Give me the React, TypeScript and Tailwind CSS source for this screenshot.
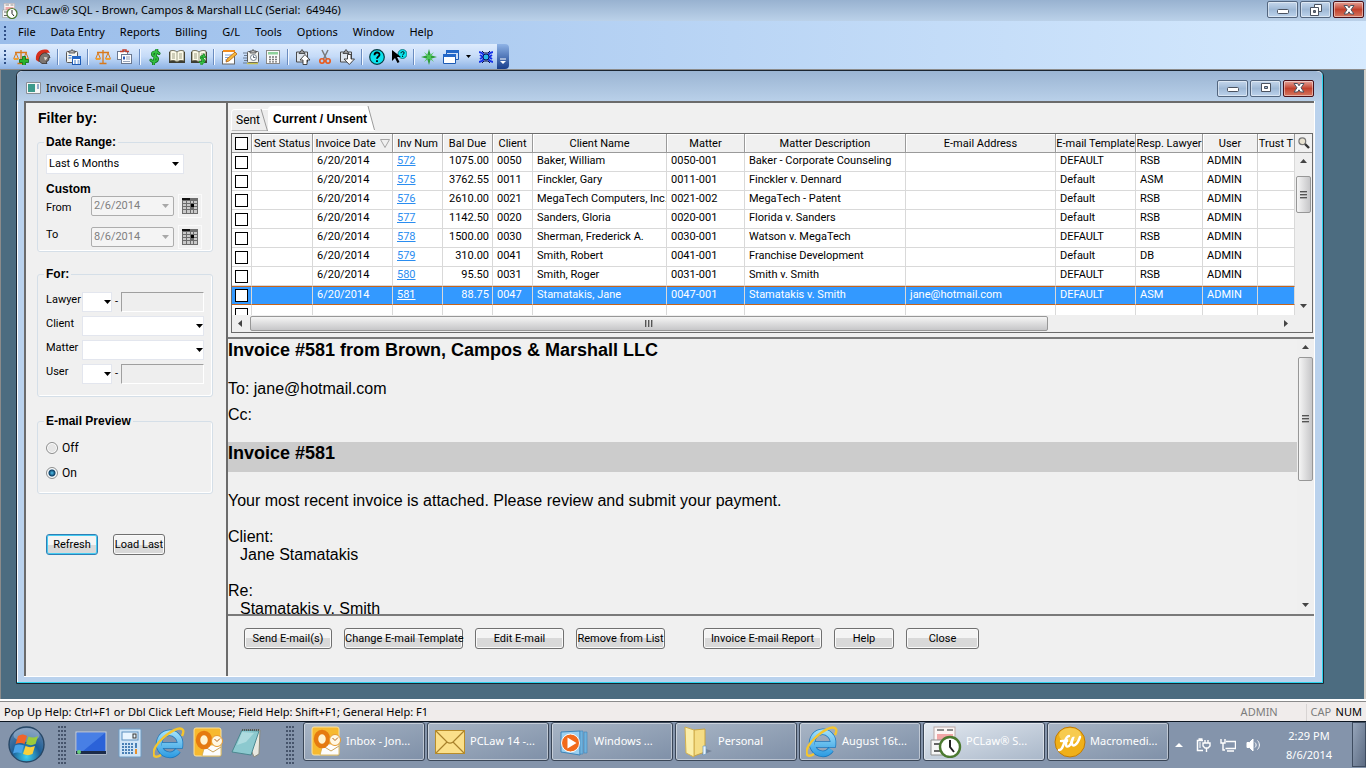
import type { ReactNode } from "react";

const menuItems = ["File", "Data Entry", "Reports", "Billing", "G/L", "Tools", "Options", "Window", "Help"];

// Column widths of the queue grid, the last one takes what is left
const columns = [
  { title: "Sent Status", width: "w-[61px]" },
  { title: "Invoice Date", width: "w-[80px]" },
  { title: "Inv Num", width: "w-[50px]" },
  { title: "Bal Due", width: "w-[50px]" },
  { title: "Client", width: "w-[40px]" },
  { title: "Client Name", width: "w-[134px]" },
  { title: "Matter", width: "w-[78px]" },
  { title: "Matter Description", width: "w-[161px]" },
  { title: "E-mail Address", width: "w-[150px]" },
  { title: "E-mail Template", width: "w-[80px]" },
  { title: "Resp. Lawyer", width: "w-[67px]" },
  { title: "User", width: "w-[55px]" },
  { title: "Trust T", width: "" },
];

const invoices = [
  { num: "572", due: "1075.00", client: "0050", name: "Baker, William", matter: "0050-001", desc: "Baker - Corporate Counseling", email: "", template: "DEFAULT", lawyer: "RSB" },
  { num: "575", due: "3762.55", client: "0011", name: "Finckler, Gary", matter: "0011-001", desc: "Finckler v. Dennard", email: "", template: "Default", lawyer: "ASM" },
  { num: "576", due: "2610.00", client: "0021", name: "MegaTech Computers, Inc.", matter: "0021-002", desc: "MegaTech - Patent", email: "", template: "Default", lawyer: "RSB" },
  { num: "577", due: "1142.50", client: "0020", name: "Sanders, Gloria", matter: "0020-001", desc: "Florida v. Sanders", email: "", template: "Default", lawyer: "RSB" },
  { num: "578", due: "1500.00", client: "0030", name: "Sherman, Frederick A.", matter: "0030-001", desc: "Watson v. MegaTech", email: "", template: "DEFAULT", lawyer: "RSB" },
  { num: "579", due: "310.00", client: "0041", name: "Smith, Robert", matter: "0041-001", desc: "Franchise Development", email: "", template: "Default", lawyer: "DB" },
  { num: "580", due: "95.50", client: "0031", name: "Smith, Roger", matter: "0031-001", desc: "Smith v. Smith", email: "", template: "DEFAULT", lawyer: "RSB" },
  { num: "581", due: "88.75", client: "0047", name: "Stamatakis, Jane", matter: "0047-001", desc: "Stamatakis v. Smith", email: "jane@hotmail.com", template: "DEFAULT", lawyer: "ASM" },
];

/* ---------- Toolbar icons ---------- */

const Scales = () => (
  <g fill="none" stroke="#d9791a" strokeWidth="1.3">
    <path d="M8 1v13M2 3.5h12M4.5 14.5h7" />
    <path d="M3 4L.8 9.5h4.6zM13 4l-2.4 5.5h4.8z" strokeWidth="1" />
    <path d="M.8 10h4.6M10.6 10h4.8" stroke="#f0a030" strokeWidth="2" />
  </g>
);

const Clip = () => (
  <g>
    <rect x="1.5" y="2.5" width="11" height="11" rx="1" fill="#f4f4f0" stroke="#5a5a5a" />
    <path d="M4 4V2h2l1-1.5L8 2h2v2z" fill="#b8b8b8" stroke="#444" strokeWidth=".8" />
  </g>
);

const ClipArrow = ({ up }: { up?: boolean }) => (
  <g>
    <path d="M1.5 3h11v10h-11z" fill="#dfe6ee" stroke="#4a4a4a" />
    <path d="M4 4.5l3-4 3 4z" fill="#999" stroke="#333" strokeWidth=".8" />
    <path
      d={up ? "M10 5.5l5 5.5h-3v4.5H8V11H5z" : "M8.5 5.5h3.5v4.5h3.5l-5.2 5.5L5 10h3.5z"}
      fill="#fff"
      stroke="#333"
      strokeWidth=".9"
    />
  </g>
);

const Book = () => (
  <g>
    <path d="M0 3h16v11H0z" fill="#3b3b30" />
    <path d="M1 2c3-1 5-.5 7 1 2-1.5 4-2 7-1v10c-3-1-5-.5-7 1-2-1.5-4-2-7-1z" fill="#fbf9e8" stroke="#55513a" strokeWidth=".8" />
    <path d="M8 3v10M3 5h3M3 7h3M3 9h3M10 5h3M10 7h3M10 9h3" stroke="#8c8a70" strokeWidth=".8" />
  </g>
);

// Dollar sign as an S bend with a slanted bar
const Dollar = () => (
  <g fill="none" strokeLinecap="round">
    <path d="M12 4.5C10 2 5.5 2.5 5.5 5.2c0 3 5.5 2 5 5C10 13 6 13.5 4 11.2M9.8.8L6.5 15.2" stroke="#11701c" strokeWidth="3" />
    <path d="M12 4.5C10 2 5.5 2.5 5.5 5.2c0 3 5.5 2 5 5C10 13 6 13.5 4 11.2M9.8.8L6.5 15.2" stroke="#35c143" strokeWidth="1.6" />
  </g>
);

const toolbar: (ReactNode | "sep")[] = [
  <>
    <Scales />
    <path d="M9.5 7.5h3v3h3v3h-3v3h-3v-3h-3v-3h3z" fill="#2bb52b" stroke="#0b6b14" strokeWidth=".8" />
  </>,
  <>
    <path d="M1 11C0 4 5-1 13 1l2 3C9 3 5 6 4 13z" fill="#d62f1c" />
    <path d="M4 12C4 7 7 3.5 11 4l3 2 1 3-3-.5 2 1.5-1 2-2 .5 1 2H7z" fill="#7d7570" stroke="#37302c" strokeWidth=".8" />
    <path d="M9 8l4 .5-3 3z" fill="#e0d8d0" />
  </>,
  "sep",
  <>
    <Clip />
    <rect x="7.5" y="7.5" width="8" height="8" fill="#fff" stroke="#1c5ab4" />
    <path d="M7 7h9v3H7z" fill="#2468c8" />
    <path d="M9 12h2M12.5 12h2M9 14h2M12.5 14h2M3.5 6.5h3M3.5 9h3" stroke="#3a76c4" />
  </>,
  "sep",
  <Scales />,
  <>
    <rect x=".5" y="2.5" width="10" height="8" fill="#fff" stroke="#6a7890" />
    <path d="M3 2.5h3V1h3v1.5h3" stroke="#c23b2a" strokeWidth="1.5" fill="none" />
    <rect x="4.5" y="5.5" width="10" height="9" fill="#fbfcff" stroke="#6a7890" />
    <path d="M9 8h4M9 10h4M6 12.5h7" stroke="#98a4b8" />
    <path d="M6 7.5h2v3H6z" fill="#2c5cb8" />
  </>,
  "sep",
  <Dollar />,
  <Book />,
  <>
    <Book />
    <g transform="translate(6 5) scale(.7)"><Dollar /></g>
  </>,
  "sep",
  <>
    <rect x="1.5" y="2.5" width="12" height="12.5" fill="#fff" stroke="#666" />
    <path d="M2 1h12v2H2z" fill="#f28c1c" />
    <path d="M4 6h7M4 8.5h5M4 11h4" stroke="#7fa3d8" />
    <path d="M5 13l1-3 8-7 2 2-8 7z" fill="#f6b93c" stroke="#b35f15" strokeWidth=".8" />
  </>,
  <>
    <path d="M0 4h4M1 6.5h4M0 9h4M1 11.5h4M0 14h4" stroke="#6d7f94" />
    <g transform="translate(3 0)">
      <Clip />
      <circle cx="7.5" cy="8.5" r="3" fill="#fff" stroke="#567" strokeWidth=".8" />
      <path d="M7.5 6.5v2h2" stroke="#345" fill="none" strokeWidth=".8" />
    </g>
    <path d="M4 14.5h11" stroke="#c9c34a" strokeWidth="1.5" />
  </>,
  <>
    <rect x="1.5" y="1.5" width="13" height="13" fill="#fafafa" stroke="#888" />
    <path d="M3 3h10v2.5H3z" fill="#8ed19b" />
    <path d="M4 8h2M7 8h2M10 8h2M4 10.5h2M7 10.5h2M10 10.5h2M4 12.8h2M7 12.8h2M10 12.8h2" stroke="#777" strokeWidth="1.3" />
  </>,
  "sep",
  <ClipArrow up />,
  <>
    <path d="M5 1l4.5 9M11 1L6.5 10" stroke="#7a7a7a" strokeWidth="1.5" />
    <circle cx="5" cy="12" r="2.2" fill="none" stroke="#e8581a" strokeWidth="1.6" />
    <circle cx="11" cy="12" r="2.2" fill="none" stroke="#e8581a" strokeWidth="1.6" />
  </>,
  <ClipArrow />,
  "sep",
  <>
    <circle cx="8" cy="8" r="7.3" fill="#0be3ee" stroke="#053b40" strokeWidth="1.2" />
    <path d="M5.5 6.2c0-3.5 5-3.5 5-.5C10.5 7.5 8 7.5 8 9.8M8 11.2v1.8" fill="none" stroke="#000" strokeWidth="1.8" />
  </>,
  <>
    <circle cx="11.5" cy="5" r="4.5" fill="#0be3ee" stroke="#0a6a70" strokeWidth=".8" />
    <path d="M10 4.2c0-2 3.2-2 3.2-.2 0 1.2-1.6 1-1.6 2.3M11.6 7v1" fill="none" stroke="#000" />
    <path d="M1 1v11l3-3 2.5 5 2-1-2.5-5h4z" fill="#000" />
  </>,
  "sep",
  <>
    <path d="M8 0l1.8 6.2L16 8l-6.2 1.8L8 16l-1.8-6.2L0 8l6.2-1.8z" fill="#2f9e3a" />
    <path d="M3 3l4 3 2 0 4-3-3 4v2l3 4-4-3H7l-4 3 3-4V7z" fill="#49c653" />
  </>,
  <>
    <path d="M3.5 1.5h12v9h-12z" fill="#cfe0f8" stroke="#1c5ab4" />
    <path d="M3 1h13v3H3z" fill="#2468c8" />
    <path d="M.5 5.5h12v9H.5z" fill="#fff" stroke="#1c5ab4" />
    <path d="M0 5h13v3H0z" fill="#2468c8" />
  </>,
];

function Toolbar() {
  return (
    <div className="flex h-[25px] items-center">
      <div className="flex h-full items-center bg-gradient-to-b from-[#dfecfd] via-[#c5dbf8] to-[#8db2e4]">
        <Grip />
        {toolbar.map((item, i) =>
          item === "sep" ? (
            <span key={i} className="mx-[3px] h-4 w-[2px] border-l border-[#6a8cc0] bg-[#f1f7ff]" />
          ) : (
            <button key={i} type="button" className="flex h-[22px] w-[22px] items-center justify-center">
              <svg width="16" height="16" viewBox="0 0 16 16">{item}</svg>
            </button>
          )
        )}
        <button type="button" aria-label="Arrange windows" className="flex h-[22px] w-[13px] items-center justify-center">
          <svg width="5" height="3"><path d="M0 0h5L2.5 3z" fill="#000" /></svg>
        </button>
        <button type="button" aria-label="Web" className="flex h-[22px] w-[22px] items-center justify-center">
          <svg width="14" height="12" viewBox="0 0 14 12">
            <path d="M0 1l3 1 2 2M14 1l-3 1-2 2M0 11l3-1 2-2M14 11l-3-1-2-2M1 4l3 2-3 2M13 4l-3 2 3 2" fill="none" stroke="#1330e8" strokeWidth="2" />
            <circle cx="7" cy="6" r="3" fill="#2cb8e8" stroke="#06135c" />
            <path d="M3 0l2 2h4l2-2M3 12l2-2h4l2 2" stroke="#04104a" fill="none" />
          </svg>
        </button>
      </div>
      <button
        type="button"
        aria-label="Toolbar options"
        className="flex h-full w-3 items-end justify-center rounded-r-sm bg-gradient-to-b from-[#8fb3e6] to-[#1a3f8c] pb-1"
      >
        <svg width="6" height="7"><path d="M0 1h6" stroke="#fff" /><path d="M0 3h6L3 6z" fill="#fff" /></svg>
      </button>
    </div>
  );
}

function Grip() {
  return (
    <span className="flex w-[10px] flex-col items-center gap-[2px]">
      {[0, 1, 2, 3].map((i) => (
        <span key={i} className="h-[2px] w-[2px] bg-[#2f4f86]" />
      ))}
    </span>
  );
}

/* ---------- Window chrome ---------- */

function CaptionButton({ kind, restored }: { kind: "min" | "max" | "close"; restored?: boolean }) {
  const look =
    kind === "close"
      ? "border-[#4a1018] bg-gradient-to-b from-[#e3a198] via-[#c2402c] to-[#d5765f]"
      : "border-[#53667f] bg-gradient-to-b from-[#c5d7ec] via-[#9fb9d6] to-[#bdd3ec]";
  return (
    <button
      type="button"
      aria-label={kind}
      className={`flex h-[17px] w-[31px] items-center justify-center rounded-[2px] border shadow-[inset_0_0_0_1px_rgba(255,255,255,0.45)] ${look}`}
    >
      <svg width="14" height="12" viewBox="0 0 14 12" stroke="#4a5260" fill="#fff">
        {kind === "min" && <rect x="1.5" y="5.5" width="11" height="4" rx="1" />}
        {kind === "max" && !restored && <path fillRule="evenodd" d="M2.5 1.5h9v8h-9zM5.5 4.5v2h3v-2z" />}
        {kind === "max" && restored && (
          <>
            <path d="M5.5.5h7v7h-7z" />
            <path fillRule="evenodd" d="M1.5 3.5h8v8h-8zM4.5 6.5v2h2v-2z" />
          </>
        )}
        {kind === "close" && (
          <path d="M2 1.5h3.5L7 3.8 8.5 1.5H12L9 5.8l3 4.2H8.5L7 7.8 5.5 10H2l3-4.2z" />
        )}
      </svg>
    </button>
  );
}

function AppIcon({ size }: { size: number }) {
  return (
    <svg width={size} height={size} viewBox="0 0 32 32" className="shrink-0">
      <rect x="4" y="1" width="21" height="24" fill="#fbf5f4" stroke="#b9a8a6" />
      <path d="M7 4h7M17 4h6" stroke="#8d8d8d" strokeWidth="2" />
      <path d="M7 8h16v7H7z" fill="#f1a7a7" />
      <path d="M1 14h12v15H1z" fill="#f6f6f6" stroke="#8f8f8f" />
      <path d="M4 18h6M4 25h6" stroke="#666" strokeWidth="2" />
      <circle cx="20" cy="21" r="10" fill="#fff" stroke="#4c7a31" strokeWidth="2.4" />
      <path d="M20 14v7l4 5" stroke="#222" strokeWidth="2" fill="none" />
    </svg>
  );
}

/* ---------- Form bits ---------- */

type DropDownProps = { id: string; value?: string; className: string; disabled?: boolean; edge?: boolean };

function DropDown({ id, value = "", className, disabled, edge }: DropDownProps) {
  return (
    <span className={`relative block h-5 ${className}`}>
      <select
        id={id}
        disabled={disabled}
        defaultValue={value}
        className={`h-full w-full appearance-none border pl-[2px] ${
          disabled ? "rounded-[2px] border-[#adadad] bg-[#f4f4f4] text-[#7f7f7f] opacity-100" : "border-[#e3e6ee] bg-white text-black"
        }`}
      >
        <option value={value}>{value}</option>
      </select>
      <svg width="7" height="4" className={`pointer-events-none absolute top-2 ${edge ? "right-px" : "right-[5px]"}`}>
        <path d="M0 0h7L3.5 4z" fill={disabled ? "#a8a8a8" : "#000"} />
      </svg>
    </span>
  );
}

function CalendarButton({ label }: { label: string }) {
  return (
    <button type="button" aria-label={label} className="ml-1 flex h-6 w-6 items-center justify-center border border-[#fafafa]">
      <svg width="16" height="16" viewBox="0 0 16 16">
        <path d="M0 0h16v16H0z" fill="#6c6c6c" />
        <path d="M0 0h8v2H0z" fill="#111" />
        <path
          d="M1 3h3v2H1zM5 3h3v2H5zM9 3h2v2H9zM12 3h3v2h-3zM1 6h3v2H1zM5 6h3v2H5zM12 6h3v2h-3zM1 9h3v2H1zM5 9h3v2H5zM12 9h3v2h-3zM1 12h3v3H1zM5 12h3v3H5zM9 12h2v3H9zM12 12h3v3h-3z"
          fill="#c9c9c9"
        />
        <path d="M9 6h3v3H9z" fill="#000" />
      </svg>
    </button>
  );
}

function Group({ title, className, children }: { title: string; className: string; children: ReactNode }) {
  return (
    <fieldset className={`rounded-[3px] border border-[#d5dfe8] px-2 shadow-[inset_-1px_-1px_0_#fff] ${className}`}>
      <legend className="-ml-[2px] h-4 px-[2px] font-['Liberation_Sans',sans-serif] text-[12px] leading-4 font-bold">{title}</legend>
      {children}
    </fieldset>
  );
}

function PushButton({ children, className, focused }: { children: ReactNode; className: string; focused?: boolean }) {
  return (
    <button
      type="button"
      className={`h-[21px] rounded-[3px] border bg-gradient-to-b from-[#f4f4f4] from-50% to-[#d9d9d9] to-50% pt-[2px] whitespace-nowrap ${
        focused ? "border-[#2f7fb5] shadow-[inset_0_0_0_1px_#45ccf2]" : "border-[#707070] shadow-[inset_0_0_0_1px_#fafafa]"
      } ${className}`}
    >
      {children}
    </button>
  );
}

function FilterPanel() {
  return (
    <aside className="w-[202px] shrink-0 border-t-2 border-l-2 border-[#6b6b6b] bg-[#f0f0f0] pr-[13px] pl-[11px]">
      <h2 className="mt-[5px] h-5 pl-px font-['Liberation_Sans',sans-serif] text-[14px] leading-5 font-bold">Filter by:</h2>

      <Group title="Date Range:" className="mt-[6px] h-[118px]">
        <div className="mt-1">
          <label htmlFor="range" className="sr-only">Date Range</label>
          <DropDown id="range" value="Last 6 Months" className="w-[138px]" />
        </div>
        <h3 className="mt-[7px] h-[13px] font-['Liberation_Sans',sans-serif] text-[12px] leading-4 font-bold">Custom</h3>
        <div className="flex h-6 items-center">
          <label htmlFor="from" className="w-[45px] pt-1">From</label>
          <DropDown id="from" value="2/6/2014" disabled className="w-[83px]" />
          <CalendarButton label="Pick from date" />
        </div>
        <div className="mt-[7px] flex h-6 items-center">
          <label htmlFor="to" className="w-[45px] pb-1">To</label>
          <DropDown id="to" value="8/6/2014" disabled className="w-[83px]" />
          <CalendarButton label="Pick to date" />
        </div>
      </Group>

      <Group title="For:" className="mt-[14px] h-[131px]">
        <div className="mt-[10px] flex flex-col gap-1">
          <div className="flex h-5 items-center">
            <label htmlFor="lawyer" className="w-9 pb-1">Lawyer</label>
            <DropDown id="lawyer" edge className="w-[30px]" />
            <span className="w-[9px] text-center">-</span>
            <input aria-label="Lawyer name" disabled className="h-5 w-[83px] border border-[#9f9f9f] border-r-white border-b-white bg-[#eee]" />
          </div>
          <div className="flex h-5 items-center">
            <label htmlFor="client" className="w-9 pb-1">Client</label>
            <DropDown id="client" edge className="w-[122px]" />
          </div>
          <div className="flex h-5 items-center">
            <label htmlFor="matter" className="w-9 pb-1">Matter</label>
            <DropDown id="matter" edge className="w-[122px]" />
          </div>
          <div className="flex h-5 items-center">
            <label htmlFor="user" className="w-9 pb-1">User</label>
            <DropDown id="user" edge className="w-[30px]" />
            <span className="w-[9px] text-center">-</span>
            <input aria-label="User name" disabled className="h-5 w-[83px] border border-[#9f9f9f] border-r-white border-b-white bg-[#eee]" />
          </div>
        </div>
      </Group>

      <Group title="E-mail Preview" className="mt-4 h-[81px]">
        <div className="mt-3 flex flex-col gap-3">
          {["Off", "On"].map((opt) => (
            <label key={opt} className="flex h-[13px] items-center gap-1 text-[12px]">
              <input
                type="radio"
                name="preview"
                defaultChecked={opt === "On"}
                className="h-3 w-3 appearance-none rounded-full border border-[#8e8f8f] bg-[#e6e6e6] shadow-[inset_0_0_0_1px_#fff] checked:bg-[radial-gradient(circle,#4fc3f0_0,#0b3f66_3px,#dfe8ee_4px)]"
              />
              {opt}
            </label>
          ))}
        </div>
      </Group>

      <div className="mt-10 flex gap-[15px] pl-[9px]">
        <PushButton focused className="w-[52px]">Refresh</PushButton>
        <PushButton className="w-[52px]">Load Last</PushButton>
      </div>
    </aside>
  );
}

/* ---------- Scroll bars ---------- */

function VScroll({ before, thumb }: { before: string; thumb: string }) {
  return (
    <div className="flex min-h-0 w-[17px] flex-1 flex-col items-center bg-[#efefef]">
      <svg width="7" height="17" className="shrink-0"><path d="M0 10h7L3.5 6z" fill="#444" /></svg>
      <div className={before} />
      <div className={`flex w-[15px] flex-col items-center justify-center gap-px rounded-[2px] border border-[#979797] bg-gradient-to-r from-[#f5f5f5] to-[#c6c6c8] ${thumb}`}>
        {[0, 1, 2].map((i) => (
          <span key={i} className="h-[2px] w-[7px] border-t border-[#555] bg-[#aaa]" />
        ))}
      </div>
      <div className="flex-1" />
      <svg width="7" height="17" className="shrink-0"><path d="M0 6h7L3.5 10z" fill="#444" /></svg>
    </div>
  );
}

function HScroll() {
  return (
    <div className="flex h-[17px] items-center bg-[#efefef]">
      <svg width="18" height="17"><path d="M10 5v7L6 8.5z" fill="#444" /></svg>
      <div className="flex h-[15px] w-[798px] items-center justify-center gap-px rounded-[2px] border border-[#979797] bg-gradient-to-b from-[#f5f5f5] to-[#c6c6c8]">
        {[0, 1, 2].map((i) => (
          <span key={i} className="h-[7px] w-[2px] border-l border-[#555] bg-[#aaa]" />
        ))}
      </div>
      <div className="flex-1" />
      <svg width="17" height="17" className="mr-[17px]"><path d="M6 5v7l4-3.5z" fill="#444" /></svg>
    </div>
  );
}

/* ---------- Queue grid ---------- */

const boxClass = "block h-[13px] w-[13px] appearance-none border border-black bg-white";

function QueueTable() {
  return (
    <div className="mr-px ml-[3px] border border-[#6b6b6b]">
      <div className="flex h-[181px]">
        <div className="min-w-0 flex-1 overflow-hidden bg-white">
          <table className="w-full table-fixed border-separate border-spacing-0">
            <thead>
              <tr className="h-[19px]">
                <th className="w-[20px] border-r border-b border-[#9a9a9a] bg-[#f0f0f0] p-0 pl-[3px]">
                  <input type="checkbox" aria-label="Select all" className={boxClass} />
                </th>
                {columns.map((col) => (
                  <th
                    key={col.title}
                    className={`overflow-hidden border-r border-b border-[#9a9a9a] bg-[#f0f0f0] p-0 text-center font-normal whitespace-nowrap shadow-[inset_1px_1px_0_#fff] ${col.width}`}
                  >
                    <span className="flex h-[18px] items-center justify-center gap-1 pt-[2px]">
                      {col.title}
                      {col.title === "Invoice Date" && (
                        <svg width="10" height="9" className="mb-[2px] shrink-0"><path d="M.5.5h9L5 8.5z" fill="none" stroke="#a5a5a5" /></svg>
                      )}
                    </span>
                  </th>
                ))}
              </tr>
            </thead>
            <tbody>
              {invoices.map((inv) => {
                const on = inv.num === "581";
                const line = on ? "border-y border-r border-y-[#c8641a] border-r-[#d9d9d9]" : "border-r border-b border-[#d9d9d9]";
                const cell = `overflow-hidden p-0 pl-1 leading-4 whitespace-nowrap ${on ? "pb-px" : "pb-[2px]"} ${line}`;
                return (
                  <tr key={inv.num} className={`h-[19px] ${on ? "bg-[#3399ff] text-white" : ""}`}>
                    <td className={`p-0 pl-[3px] ${line}`}>
                      <input type="checkbox" aria-label={`Select invoice ${inv.num}`} className={boxClass} />
                    </td>
                    <td className={cell} />
                    <td className={cell}>6/20/2014</td>
                    <td className={cell}>
                      <a href={`#${inv.num}`} className={`underline ${on ? "text-white" : "text-[#2a8df0]"}`}>{inv.num}</a>
                    </td>
                    <td className={`${cell} pr-[3px] text-right`}>{inv.due}</td>
                    <td className={cell}>{inv.client}</td>
                    <td className={cell}>{inv.name}</td>
                    <td className={cell}>{inv.matter}</td>
                    <td className={cell}>{inv.desc}</td>
                    <td className={cell}>{inv.email}</td>
                    <td className={cell}>{inv.template}</td>
                    <td className={cell}>{inv.lawyer}</td>
                    <td className={cell}>ADMIN</td>
                    <td className={cell} />
                  </tr>
                );
              })}
              <tr className="h-[19px]">
                <td className="border-r border-[#d9d9d9] p-0 pl-[3px]">
                  <input type="checkbox" aria-label="Select next invoice" className={boxClass} />
                </td>
                {columns.map((col) => (
                  <td key={col.title} className="border-r border-[#d9d9d9]" />
                ))}
              </tr>
            </tbody>
          </table>
        </div>
        <div className="flex w-[17px] flex-col">
          <button type="button" aria-label="Search" className="flex h-[19px] items-center justify-center border-b border-[#9a9a9a] bg-[#f0f0f0]">
            <svg width="12" height="12" viewBox="0 0 12 12">
              <path d="M6.5 6.5l4.5 4.5" stroke="#333" strokeWidth="2.4" />
              <circle cx="4.3" cy="4.3" r="3.4" fill="#e8e2d0" stroke="#777" strokeWidth="1.2" />
            </svg>
          </button>
          <VScroll before="h-[6px]" thumb="h-[37px]" />
        </div>
      </div>
      <HScroll />
    </div>
  );
}

function Tabs() {
  return (
    <div className="flex h-[30px] items-end pb-[2px] pl-[3px]">
      <button type="button" className="flex h-[22px] items-center rounded-tl border-t border-l border-b border-white border-b-[#bbb] bg-[#ededed] pl-1 text-[12px] leading-[14px]">
        Sent
        <svg width="8" height="22"><path d="M1 0l6.5 22" stroke="#9a9a9a" /></svg>
      </button>
      <button type="button" className="flex h-[25px] items-center rounded-tl-sm bg-white pl-[5px] font-['Liberation_Sans',sans-serif] text-[12px] font-bold whitespace-nowrap">
        Current / Unsent
        <svg width="8" height="25">
          <path d="M1 0h7v25z" fill="#f0f0f0" />
          <path d="M1 0l6.5 24" stroke="#9a9a9a" />
        </svg>
      </button>
    </div>
  );
}

function Preview() {
  return (
    <div className="flex min-h-0 flex-1 border-t-2 border-b-2 border-[#7a7a7a] font-['Liberation_Sans',Arial,sans-serif]">
      <article className="min-w-0 flex-1 overflow-hidden text-[16px] leading-[18px]">
        <h2 className="h-[30px] pt-px text-[18px] leading-5 font-bold">Invoice #581 from Brown, Campos &amp; Marshall LLC</h2>
        <p className="mt-[11px]">To: jane@hotmail.com</p>
        <p className="mt-2">Cc:</p>
        <h3 className="mt-[18px] h-[30px] bg-[#cccccc] pt-px text-[18px] leading-5 font-bold">Invoice #581</h3>
        <p className="mt-5">Your most recent invoice is attached. Please review and submit your payment.</p>
        <p className="mt-[18px]">Client:</p>
        <p className="pl-3">Jane Stamatakis</p>
        <p className="mt-[18px]">Re:</p>
        <p className="pl-3">Stamatakis v. Smith</p>
      </article>
      <div className="flex flex-col">
        <VScroll before="h-px" thumb="h-[124px]" />
      </div>
    </div>
  );
}

/* ---------- Task bar ---------- */

const Outlook = () => (
  <svg width="32" height="32" viewBox="0 0 32 32" className="shrink-0">
    <rect x="2" y="1" width="27" height="28" rx="2" fill="#f7b92f" stroke="#fbe3a0" />
    <path d="M13 18h16v11H10z" fill="#fdfdfd" stroke="#d0a94a" strokeWidth=".8" />
    <path d="M13 20l8 5 8-5" fill="none" stroke="#c9a45c" />
    <ellipse cx="12" cy="13" rx="6" ry="7" fill="#fff3cf" stroke="#e57a10" strokeWidth="4.5" />
    <circle cx="25" cy="14" r="5.5" fill="#fff8e4" stroke="#e79a2e" />
    <path d="M22.5 12l2.5 2.5 3-3" stroke="#b0601a" fill="none" />
  </svg>
);

const Explorer = () => (
  <svg width="32" height="32" viewBox="0 0 32 32" className="shrink-0">
    <defs>
      <linearGradient id="ie" x1="0" y1="0" x2="0" y2="32" gradientUnits="userSpaceOnUse">
        <stop offset="0" stopColor="#b5ecfd" />
        <stop offset="1" stopColor="#2596e0" />
      </linearGradient>
    </defs>
    <path d="M9 18.5H27A10.5 11 0 1 0 25 23.5" fill="none" stroke="#1d78bd" strokeWidth="6.5" />
    <path d="M9 18.5H27A10.5 11 0 1 0 25 23.5" fill="none" stroke="url(#ie)" strokeWidth="5" />
    <path d="M8 28C-2 34-2 23 8 13 17 4 27-1 30 3c1 2 0 4-1 6" fill="none" stroke="#f4c52f" strokeWidth="2.4" />
  </svg>
);

const Envelope = () => (
  <svg width="32" height="32" viewBox="0 0 32 32" className="shrink-0">
    <rect x="1.5" y="4.5" width="29" height="23" fill="#fbe08a" stroke="#b98d2a" />
    <path d="M2 27l11-11M30 27L19 16M2 5l11 11c2 1.5 4 1.5 6 0L30 5" fill="none" stroke="#a9822c" strokeWidth="1.2" />
  </svg>
);

const MediaPlayer = () => (
  <svg width="32" height="32" viewBox="0 0 32 32" className="shrink-0">
    <path d="M3 6l19-1v24l-19-3z" fill="#9bd0f0" stroke="#3c83b8" />
    <path d="M22 5h3v23h-3zM26 6h3v21h-3z" fill="#6fb2dd" stroke="#3c83b8" strokeWidth=".6" />
    <circle cx="12.5" cy="17" r="9" fill="#f26a1b" stroke="#fff" />
    <path d="M9.5 11.5v11l9-5.5z" fill="#fff" />
  </svg>
);

const Folder = () => (
  <svg width="32" height="32" viewBox="0 0 32 32" className="shrink-0">
    <path d="M20 29l10-4-6-2z" fill="#55637a" opacity=".5" />
    <path d="M12 4l11-1v23l-11 4z" fill="#f5dd85" stroke="#c9a443" />
    <path d="M3 1l9 3v27l-8-4z" fill="#fbeeaa" stroke="#d3b04e" />
    <path d="M21 20h3v8l-3 1z" fill="#e9f3fb" stroke="#6a9cc4" strokeWidth=".7" />
  </svg>
);

const Fireworks = () => (
  <svg width="32" height="32" viewBox="0 0 32 32" className="shrink-0">
    <circle cx="16" cy="16" r="15" fill="#f0b018" stroke="#c07a05" />
    <ellipse cx="16" cy="9" rx="11" ry="7" fill="#fad765" opacity=".7" />
    <path d="M5 24c5 1 5-14 10-14M7 15h6M13 14c-2 5-1 8 2 6s3-8 4-8c-2 5-1 9 2 7s4-5 5-8" fill="none" stroke="#fff" strokeWidth="2.4" strokeLinecap="round" />
  </svg>
);

const tasks = [
  { label: "Inbox - Jon...", icon: <Outlook /> },
  { label: "PCLaw 14 -...", icon: <Envelope /> },
  { label: "Windows ...", icon: <MediaPlayer /> },
  { label: "Personal", icon: <Folder /> },
  { label: "August 16t...", icon: <Explorer /> },
  { label: "PCLaw® S...", icon: <AppIcon size={32} />, active: true },
  { label: "Macromedi...", icon: <Fireworks /> },
];

const quickLaunch = [
  { label: "Desktop", icon: (
    <svg width="32" height="32" viewBox="0 0 32 32">
      <rect x="1" y="5" width="30" height="22" fill="#2b62d8" stroke="#c9d2de" />
      <path d="M2 6h28L8 24H2z" fill="#5b92ee" opacity=".6" />
      <path d="M1 24h30v3H1z" fill="#1c2b48" />
      <circle cx="4" cy="25" r="2" fill="#6ad07a" />
    </svg>
  ) },
  { label: "Calculator", icon: (
    <svg width="32" height="32" viewBox="0 0 32 32">
      <rect x="5" y="2" width="22" height="28" rx="1" fill="#cfe4f6" stroke="#6f9cc4" />
      <rect x="8" y="5" width="16" height="8" fill="#e9f5ff" stroke="#5d8fbf" />
      <rect x="19" y="7" width="3" height="4" fill="none" stroke="#333" />
      <path d="M8 17h12M8 20h12M8 23h12M8 26h12" stroke="#4a80b5" strokeWidth="2" strokeDasharray="2 1" />
      <path d="M22 16v5" stroke="#4a80b5" strokeWidth="2" />
      <path d="M22 22v5" stroke="#e8902a" strokeWidth="2" />
    </svg>
  ) },
  { label: "Internet Explorer", icon: <Explorer /> },
  { label: "Outlook", icon: <Outlook /> },
  { label: "Notepad", icon: (
    <svg width="32" height="32" viewBox="0 0 32 32">
      <path d="M12 3h17l-1 24-5 3z" fill="#e8e8e0" stroke="#8a8a7c" />
      <path d="M11 3l17 1-8 24L1 25z" fill="#8cc9cf" stroke="#4c8890" />
      <path d="M11 5l12 1-8 9-9 3z" fill="#c4e8ea" opacity=".6" />
      <path d="M11 3h18" stroke="#555" strokeWidth="2" strokeDasharray="1 1" />
    </svg>
  ) },
];

function DotGrip() {
  return (
    <svg width="8" height="38" className="mt-1 shrink-0">
      {Array.from({ length: 10 }, (_, i) => (
        <path key={i} d={`M0 ${i * 4 + 1}h2M3 ${i * 4 + 1}h2M6 ${i * 4 + 1}h2`} stroke="#46546b" strokeWidth="2" />
      ))}
    </svg>
  );
}

function TaskBar() {
  return (
    <footer className="flex h-[47px] shrink-0 items-start border-t border-[#0c1520] bg-[#8494ab] font-['Noto_Sans',sans-serif] text-[11px] text-white">
      <button type="button" aria-label="Start" className="mt-1 ml-2 w-[37px]">
        <svg width="37" height="38" viewBox="0 0 37 38">
          <defs>
            <radialGradient id="orb" cx=".5" cy=".85" r=".8">
              <stop offset="0" stopColor="#3fd0f0" />
              <stop offset=".5" stopColor="#1c5f97" />
              <stop offset="1" stopColor="#5d7fa8" />
            </radialGradient>
          </defs>
          <circle cx="18.5" cy="18.5" r="17.5" fill="url(#orb)" stroke="#274766" strokeWidth="1.4" />
          <ellipse cx="18.5" cy="9" rx="13" ry="7" fill="#fff" opacity=".28" />
          <path d="M10 10c3-2 5.5-2 9 0l-2.5 8c-3-1.5-5.5-1.5-9 0z" fill="#f0642a" />
          <path d="M20.5 10.5c3 1.5 6 1.5 9.5-.5l-2.5 8c-3 1.5-6 1.5-9.5 0z" fill="#9ccb3c" />
          <path d="M7 19.5c3-1.5 5.5-1.5 9 0l-2.5 8c-3-1.5-5.5-1.5-8.5 0z" fill="#4aa3e8" />
          <path d="M17.5 20c3 1.5 6 1.5 9.5 0l-2.5 8c-3 1.5-6 1.5-9.5 0z" fill="#fbd03c" />
        </svg>
      </button>
      <div className="ml-[13px]"><DotGrip /></div>
      <div className="mt-[5px] ml-[9px] flex w-[211px] gap-[7px]">
        {quickLaunch.map((q) => (
          <button key={q.label} type="button" aria-label={q.label} className="h-8 w-8">{q.icon}</button>
        ))}
      </div>
      <DotGrip />
      <div className="ml-[9px] flex gap-[2px]">
        {tasks.map((t) => (
          <button
            key={t.label}
            type="button"
            className={`flex h-[39px] w-[122px] items-center gap-1 overflow-hidden rounded-[3px] border border-[#3a4657] pl-[6px] whitespace-nowrap shadow-[inset_0_0_0_1px_rgba(255,255,255,0.45)] ${
              t.active ? "bg-gradient-to-br from-[#e3e9f0] to-[#a9b7c9]" : "bg-gradient-to-br from-[#a8b5c5] to-[#7f90a8]"
            }`}
          >
            {t.icon}
            {t.label}
          </button>
        ))}
      </div>
      <div className="ml-auto flex h-full items-center">
        <div className="flex items-center gap-[9px]">
          <svg width="8" height="4" className="mr-[3px]"><path d="M0 4h8L4 0z" fill="#fff" /></svg>
          <svg width="16" height="16" viewBox="0 0 16 16" fill="none" stroke="#fff">
            <path d="M8 3.5H2.5v10H8M3.5 2h4" strokeWidth="1.5" />
            <path d="M4 6h2M4 8h2M4 10h2" />
            <path d="M8 6h7v3l-2 2h-3L8 9zM10 3v3M13 3v3M11.5 11v4" strokeWidth="1.4" />
          </svg>
          <svg width="16" height="16" viewBox="0 0 16 16" fill="none" stroke="#fff">
            <path d="M6 4.5h9.5v7H5.5M7 14h7" strokeWidth="1.4" />
            <path d="M1 2v4h4V2M3 6v7h2" strokeWidth="1.4" />
          </svg>
          <svg width="16" height="16" viewBox="0 0 16 16" fill="none" stroke="#fff">
            <path d="M2 5.5h2.5L8 2v12l-3.5-3.5H2z" fill="#fff" />
            <path d="M10 5.5c1.5 1.5 1.5 3.5 0 5M12.5 3.5c2.5 2.5 2.5 6.5 0 9" />
          </svg>
        </div>
        <div className="ml-[13px] w-[70px] text-center leading-[19px]">
          <p>2:29 PM</p>
          <p>8/6/2014</p>
        </div>
        <button type="button" aria-label="Show desktop" className="ml-2 h-[45px] w-[14px] self-start border border-[#3f4d61] bg-gradient-to-br from-[#96a5ba] to-[#5d6c83]" />
      </div>
    </footer>
  );
}

export default function App() {
  return (
    <div className="flex h-screen flex-col overflow-hidden bg-[#4c6c80] font-[Roboto,'Liberation_Sans',sans-serif] text-[11px] text-black">
      <header className="font-['Noto_Sans',sans-serif]">
        <div className="flex h-[21px] items-center bg-gradient-to-b from-[#98b2d0] to-[#bbd1e9] pl-[2px]">
          <AppIcon size={16} />
          <h1 className="flex-1 pl-2 whitespace-pre">PCLaw® SQL - Brown, Campos &amp; Marshall LLC (Serial:  64946)</h1>
          <div className="flex h-full items-start gap-[2px] pt-px pr-[2px]">
            <CaptionButton kind="min" />
            <CaptionButton kind="max" restored />
            <CaptionButton kind="close" />
          </div>
        </div>
        <div className="bg-gradient-to-r from-[#9abdea] to-[#d6eafe]">
          <nav className="flex h-[23px] items-center gap-px">
            <Grip />
            {menuItems.map((item) => (
              <button key={item} type="button" className="px-[7px]">{item}</button>
            ))}
          </nav>
          <Toolbar />
        </div>
      </header>

      <main className="flex min-h-0 flex-1 border-t border-r-2 border-l border-t-[#8b8b8b] border-r-[#d4d0c8] border-l-[#8b8b8b] pr-10 pb-[15px] pl-[15px]">
        <section className="flex min-w-0 flex-1 flex-col rounded-t-md border border-[#1b2530] bg-[#bad2ed] shadow-[inset_-1px_-1px_0_#2ad4ee,inset_1px_1px_0_#fff]">
          <div className="mr-px flex h-[30px] items-center rounded-t-md bg-gradient-to-b from-[#9bb5d3] to-[#b9d0e9] pt-1 pr-2 pl-[9px] font-['Noto_Sans',sans-serif]">
            <svg width="15" height="12">
              <path d="M.5.5h14v11H.5z" fill="#f6f6f6" stroke="#8a8f96" />
              <path d="M2 2h7v8H2z" fill="#3d9a8c" />
              <path d="M12 2v5" stroke="#35609c" />
            </svg>
            <h1 className="flex-1 pl-[5px]">Invoice E-mail Queue</h1>
            <div className="flex gap-[2px]">
              <CaptionButton kind="min" />
              <CaptionButton kind="max" />
              <CaptionButton kind="close" />
            </div>
          </div>

          <div className="mr-2 mb-[6px] ml-[7px] flex min-h-0 flex-1 border-r border-b border-white">
            <FilterPanel />
            <div className="flex min-w-0 flex-1 flex-col border-t-2 border-l-2 border-[#6b6b6b] bg-[#f0f0f0]">
              <Tabs />
              <QueueTable />
              <div className="h-1 shrink-0" />
              <Preview />
              <div className="flex h-[60px] shrink-0 items-start gap-3 pt-3 pl-4">
                <PushButton className="w-[88px]">Send E-mail(s)</PushButton>
                <PushButton className="w-[119px]">Change E-mail Template</PushButton>
                <PushButton className="w-[89px]">Edit E-mail</PushButton>
                <PushButton className="w-[89px]">Remove from List</PushButton>
                <PushButton className="ml-[26px] w-[119px]">Invoice E-mail Report</PushButton>
                <PushButton className="w-[60px]">Help</PushButton>
                <PushButton className="w-[73px]">Close</PushButton>
              </div>
            </div>
          </div>
        </section>
      </main>

      <div className="flex h-[22px] shrink-0 items-center border-t-2 border-white bg-[#f0eceb] px-1 pt-[3px] font-['Noto_Sans',sans-serif] shadow-[inset_0_1px_0_#8b8b8b]">
        <p className="flex-1">Pop Up Help: Ctrl+F1 or Dbl Click Left Mouse; Field Help: Shift+F1; General Help: F1</p>
        <span className="w-[65px] text-[#7c7c7c]">ADMIN</span>
        <span className="w-[26px] border-l border-[#d8d4d3] pl-1 text-[#7c7c7c]">CAP</span>
        <span className="ml-1">NUM</span>
      </div>
      <TaskBar />
    </div>
  );
}
